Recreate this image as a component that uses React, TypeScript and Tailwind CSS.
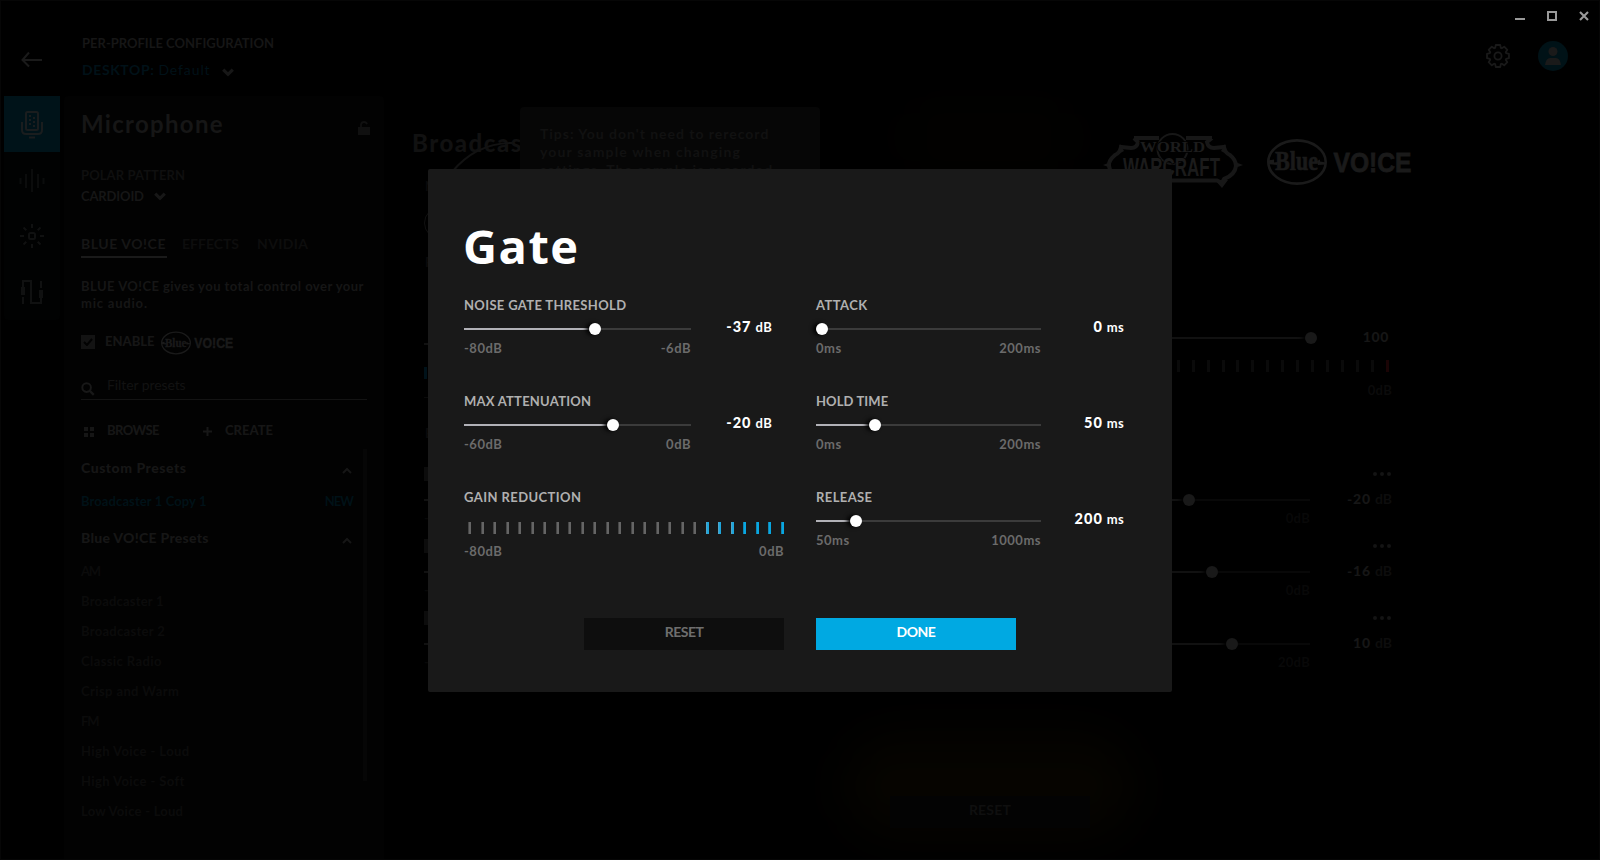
import type { ReactNode } from "react";

const presets: [string, string][] = [
  ["AM", "tracking-[-1.2px]"],
  ["Broadcaster 1", "tracking-[0.2px]"],
  ["Broadcaster 2", "tracking-[0.3px]"],
  ["Classic Radio", "tracking-[0.4px]"],
  ["Crisp and Warm", "tracking-[0.4px]"],
  ["FM", "tracking-[-1.2px]"],
  ["High Voice - Loud", "tracking-[0.4px]"],
  ["High Voice - Soft", "tracking-[0.4px]"],
  ["Low Voice - Loud", "tracking-[0.25px]"],
];

function Slider({ fill }: { fill: number }) {
  return (
    <div className="flex h-3 w-full items-center">
      <div className="h-0.5 shrink-0 bg-[#b1b1b7]" style={{ width: fill }} />
      <div className="relative size-3 shrink-0 rounded-full bg-white shadow-[-3px_0_4px_0_#000]" />
      <div className="h-0.5 grow bg-[#3b3b3b]" />
    </div>
  );
}

function DimSlider({ fill }: { fill: number }) {
  return (
    <div className="flex h-3 w-full items-center">
      <div className="h-0.5 shrink-0 bg-[#111111]" style={{ width: fill }} />
      <div className="relative size-3 shrink-0 rounded-full bg-[#191919] shadow-[-3px_0_4px_0_#000]" />
      <div className="h-0.5 grow bg-[#080808]" />
    </div>
  );
}

type ControlProps = {
  label: ReactNode;
  fill: number;
  min: string;
  max: string;
  value: string;
  unit: string;
  wide?: boolean;
};

function Control({ label, fill, min, max, value, unit, wide }: ControlProps) {
  return (
    <div className="h-24 w-[308px]">
      {label}
      <div className="mt-[5px] flex h-[21px] items-start">
        <div className={wide ? "w-[227px] pt-[4px]" : "w-[225px] pt-[4px]"}>
          <Slider fill={fill} />
        </div>
        <div className="flex grow items-baseline justify-end text-white">
          <span className="text-[14.5px] leading-4 font-black tracking-[1px]">{value}</span>
          <span className="ml-1 text-[13px] leading-4 font-bold tracking-[0.3px]">{unit}</span>
        </div>
      </div>
      <div
        className={`flex justify-between text-[13px] leading-[17px] font-bold tracking-[0.5px] text-[#6b6b6b] ${
          wide ? "w-[227px]" : "w-[225px]"
        }`}
      >
        <span>{min}</span>
        <span>{max}</span>
      </div>
    </div>
  );
}

function Label({ children, tracking }: { children: string; tracking: string }) {
  return <div className={`text-[13px] leading-[17px] font-bold text-[#b0b0b0] ${tracking}`}>{children}</div>;
}

function GainReduction() {
  return (
    <div className="h-24 w-[320px]">
      <Label tracking="tracking-[0.42px]">GAIN REDUCTION</Label>
      <div className="mt-4 ml-1 flex w-[316px] justify-between">
        {Array.from({ length: 26 }, (_, i) => (
          <span
            key={i}
            className={`h-3 w-[3px] ${
              i < 19
                ? "border-l border-[#464646] bg-[#656565]"
                : i < 22
                  ? "border-l border-[#4fa6c9] bg-[#1fa6dc]"
                  : "border-l border-[#1287b2] bg-[#08a7e2]"
            }`}
          />
        ))}
      </div>
      <div className="mt-[9px] flex justify-between text-[13px] leading-[17px] font-bold tracking-[0.5px] text-[#6b6b6b]">
        <span>-80dB</span>
        <span>0dB</span>
      </div>
    </div>
  );
}

function GateDialog() {
  return (
    <div className="absolute top-[169px] left-[428px] h-[523px] w-[744px] rounded-[2px] bg-[#191919] px-9 pt-[49px]">
      <h2 className="-ml-px font-['Open_Sans',sans-serif] text-[47px] leading-[56px] font-bold tracking-[1.5px] text-white">
        Gate
      </h2>
      <div className="mt-[23px] flex">
        <div className="w-[352px]">
          <Control
            wide
            label={<Label tracking="tracking-[0.34px]">NOISE GATE THRESHOLD</Label>}
            fill={125}
            min="-80dB"
            max="-6dB"
            value="-37"
            unit="dB"
          />
          <Control
            wide
            label={<Label tracking="tracking-[0.24px]">MAX ATTENUATION</Label>}
            fill={143}
            min="-60dB"
            max="0dB"
            value="-20"
            unit="dB"
          />
          <GainReduction />
        </div>
        <div>
          <Control
            label={<Label tracking="tracking-[0.4px]">ATTACK</Label>}
            fill={0}
            min="0ms"
            max="200ms"
            value="0"
            unit="ms"
          />
          <Control
            label={<Label tracking="tracking-[0.1px]">HOLD TIME</Label>}
            fill={53}
            min="0ms"
            max="200ms"
            value="50"
            unit="ms"
          />
          <Control
            label={<Label tracking="tracking-[0.4px]">RELEASE</Label>}
            fill={34}
            min="50ms"
            max="1000ms"
            value="200"
            unit="ms"
          />
        </div>
      </div>
      <div className="mt-[33px] flex justify-center gap-8 text-[14px] font-bold tracking-[-0.5px]">
        <button className="h-8 w-[200px] bg-[#0e0e0e] pb-[6px] text-[#6e6e6e]">RESET</button>
        <button className="h-8 w-[200px] bg-[#00a9e2] pb-[6px] text-white">DONE</button>
      </div>
    </div>
  );
}

function Chevron({ up = false }: { up?: boolean }) {
  return up ? (
    <svg width="10" height="7" viewBox="0 0 10 7">
      <path d="M1 6 5 2l4 4" fill="none" stroke="#161616" strokeWidth="2" />
    </svg>
  ) : (
    <svg width="12" height="9" viewBox="0 0 12 9">
      <path d="M1.2 1.7 6 6.3l4.8-4.6" fill="none" stroke="#171717" strokeWidth="3.2" />
    </svg>
  );
}

function BlueMark({ className }: { className: string }) {
  return (
    <svg className={className} viewBox="0 0 146 48" fill="#1a1a1a">
      <ellipse cx="30" cy="24" rx="28.7" ry="21.6" fill="none" stroke="#1a1a1a" strokeWidth="2.6" />
      <path d="M1 22.500l6-1v3l4-.5-1 3-9-1zM59 24.500l-6-1v-2l-3 1.500 1 4 8-.5z" />
      <text
        x="8"
        y="32"
        fontFamily="Liberation Serif, serif"
        fontSize="27"
        fontWeight="700"
        textLength="43"
        lengthAdjust="spacingAndGlyphs"
        stroke="#1a1a1a"
        strokeWidth="0.7"
      >
        Blue
      </text>
      <text
        x="66.500"
        y="34"
        fontFamily="Liberation Sans, sans-serif"
        fontSize="27.500"
        fontWeight="700"
        textLength="78"
        lengthAdjust="spacingAndGlyphs"
        stroke="#1a1a1a"
        strokeWidth="0.8"
      >
        VO!CE
      </text>
    </svg>
  );
}

function WarcraftMark() {
  return (
    <svg className="mt-[37px] h-[56px] w-[140px] shrink-0" viewBox="0 0 140 56">
      <g fill="none" stroke="#171717">
        <circle cx="69.500" cy="16" r="15" strokeWidth="2" />
        <path
          strokeWidth="4"
          d="M31 5H56M83 5H109M31 5 35 9Q34 15 28 15L18 14Q17 20 12 22 5 28 6 33 7 42 18 46L21 49 26 47.500H114L119 50 121 46Q132 42 133 33 133 27 127 22 122 20 121 14L111 15Q105 15 104 9L109 5"
        />
      </g>
      <path fill="#171717" d="M0 32l8-3v6zM140 32l-8-3v6zM17 11l4 7-7 4zM122 11l-4 7 7 4zM119 55l-7-8h13zM20 55l-7-8h13z" />
      <text
        x="37"
        y="18.500"
        fill="#1c1c1c"
        fontFamily="Liberation Serif, serif"
        fontSize="14"
        textLength="65"
        lengthAdjust="spacingAndGlyphs"
        stroke="#000"
        strokeWidth="1.500"
        paintOrder="stroke"
      >
        WORLD
      </text>
      <text
        x="20"
        y="43"
        fill="#1b1b1b"
        fontFamily="Liberation Sans, sans-serif"
        fontSize="26"
        fontWeight="700"
        textLength="97"
        lengthAdjust="spacingAndGlyphs"
        stroke="#000"
        strokeWidth="1.500"
        paintOrder="stroke"
      >
        WARCRAFT
      </text>
    </svg>
  );
}

const gearPoints = Array.from({ length: 8 }, (_, i) =>
  [
    [-0.33, 8.6],
    [-0.2, 11.2],
    [0.2, 11.2],
    [0.33, 8.6],
  ].map(([a, r]) => {
    const t = (i * Math.PI) / 4 + a;
    return `${(12 + r * Math.sin(t)).toFixed(2)},${(12 - r * Math.cos(t)).toFixed(2)}`;
  }),
)
  .flat()
  .join(" ");

function Header() {
  return (
    <header className="flex h-24 shrink-0">
      <div className="w-[82px] pt-[51px] pl-[21px]">
        <svg width="22" height="17" viewBox="0 0 22 17">
          <path d="M8 1.500 1.500 9 8 15.500M1.500 9H21" fill="none" stroke="#1a1a1a" strokeWidth="2" />
        </svg>
      </div>
      <div className="pt-[35px] font-bold">
        <div className="text-[13px] leading-[17px] text-[#161616]">PER-PROFILE CONFIGURATION</div>
        <div className="mt-[10px] flex items-center text-[14px] leading-4 tracking-[0.6px] text-[#001118]">
          <span>
            DESKTOP: <span className="font-normal tracking-[0.9px]">Default</span>
          </span>
          <span className="mt-1 ml-[11px]">
            <Chevron />
          </span>
        </div>
      </div>
      <div className="ml-auto">
        <div className="mt-[11px] mr-[11px] flex h-[10px] justify-end gap-[22px]">
          <span className="mt-[7px] h-0.5 w-2.5 bg-[#999999]" />
          <span className="size-2.5 border-2 border-[#999999]" />
          <svg width="10" height="10" viewBox="0 0 10 10">
            <path d="M1 1l8 8M9 1 1 9" stroke="#999999" strokeWidth="2.100" />
          </svg>
        </div>
        <div className="mt-5 mr-8 flex h-[30px] items-center justify-end gap-7">
          <svg width="24" height="24" viewBox="0 0 24 24" fill="none" stroke="#191919" strokeWidth="1.800" strokeLinejoin="round">
            <polygon points={gearPoints} />
            <circle cx="12" cy="12" r="3.600" />
          </svg>
          <svg width="30" height="30" viewBox="0 0 30 30">
            <circle cx="15" cy="15" r="15" fill="#001217" />
            <circle cx="15" cy="10.500" r="4.500" fill="#1a1a1a" />
            <path d="M7 24q1-7 5-7h6q4 0 5 7z" fill="#1a1a1a" />
          </svg>
        </div>
      </div>
    </header>
  );
}

function NavRail() {
  return (
    <nav className="h-56 w-14 shrink-0 rounded-b bg-[#010202]">
      <div className="flex h-14 items-center justify-center bg-[#001319]">
        <svg width="24" height="30" viewBox="0 0 24 30" fill="none" stroke="#1a1d1e" strokeWidth="2">
          <rect x="6" y="3" width="12" height="18" rx="1.500" />
          <path d="M2 13v8q0 4 4 4h12q4 0 4-4v-8M9 28.500h6" />
          <path d="M9 7h2M9 11h2M9 15h2M13 9h2M13 13h2M13 17h2" />
        </svg>
      </div>
      <div className="flex h-14 items-center justify-center">
        <svg width="26" height="24" viewBox="0 0 26 24" stroke="#0b0c0c" strokeWidth="2">
          <path d="M1.500 10v6M7 6v14M13 1v23M19 6v14M24.500 10v6" />
        </svg>
      </div>
      <div className="flex h-14 items-center justify-center">
        <svg width="24" height="24" viewBox="0 0 24 24" fill="none" stroke="#101111" strokeWidth="2">
          <rect x="9" y="9" width="6" height="6" rx="1.500" />
          <path d="M12 0v4M12 20v4M0 12h4M20 12h4M3.500 3.500l2.800 2.800M17.700 17.700l2.800 2.800M3.500 20.500l2.800-2.800M17.700 6.300l2.800-2.800" />
        </svg>
      </div>
      <div className="flex h-14 items-center justify-center">
        <svg width="22" height="24" viewBox="0 0 22 24" fill="none" stroke="#101111" strokeWidth="2">
          <path d="M2 17v7M2 12V1h8v22h10v-7M20 8V1" />
          <path d="M2 7v8M20 10v8" strokeWidth="4" />
        </svg>
      </div>
    </nav>
  );
}

function Sidebar() {
  return (
    <aside className="ml-1 w-80 shrink-0 rounded-t bg-[#020202] pt-3 pl-[17px] text-[13px] font-bold text-[#161616]">
      <div className="flex justify-between pr-[14px]">
        <h1 className="text-[24px] leading-[31px] tracking-[1.3px]">Microphone</h1>
        <svg className="mt-[13px]" width="12" height="14" viewBox="0 0 12 14">
          <path d="M0 6h12v8H0z" fill="#101010" />
          <path d="M3 6V3.500Q3.500 1 6 1t3 2.200" fill="none" stroke="#101010" strokeWidth="1.800" />
        </svg>
      </div>
      <div className="mt-7 leading-4 tracking-[0.1px] text-[#0f0f0f]">POLAR PATTERN</div>
      <div className="mt-[5px] flex items-center gap-[10px] leading-4">
        <span className="tracking-[-0.14px]">CARDIOID</span>
        <Chevron />
      </div>
      <div className="mt-8 flex text-[14px] leading-4">
        <span className="w-[86px] border-b-2 border-[#1a1a1a] pb-1 tracking-[0.55px]">BLUE VO!CE</span>
        <span className="ml-[15px] w-[59px] text-[#0d0d0d]">EFFECTS</span>
        <span className="ml-4 tracking-[0.36px] text-[#0d0d0d]">NVIDIA</span>
      </div>
      <p className="mt-5 leading-[17px] tracking-[0.46px]">
        BLUE VO!CE gives you total control over your
        <br />
        <span className="tracking-[0.8px]">mic audio.</span>
      </p>
      <div className="mt-[18px] flex h-6 items-center">
        <span className="flex size-3.5 items-center justify-center bg-[#131313]">
          <svg width="10" height="8" viewBox="0 0 10 8">
            <path d="M1 4l3 3 5-6" fill="none" stroke="#020202" strokeWidth="2" />
          </svg>
        </span>
        <span className="ml-[10px] w-14 font-black">ENABLE</span>
        <BlueMark className="mt-0.5 h-6 w-[73px]" />
      </div>
      <div className="mt-[21px] flex h-[25px] w-[286px] items-center border-b border-[#131313]">
        <svg className="mt-1" width="14" height="14" viewBox="0 0 14 14">
          <circle cx="5.600" cy="5.600" r="4.300" fill="none" stroke="#181818" strokeWidth="2" />
          <path d="M8.800 8.800l4 4" stroke="#181818" strokeWidth="2.400" />
        </svg>
        <span className="mb-1 ml-3 text-[14px] leading-4 font-normal tracking-[-0.09px] text-[#121212]">Filter presets</span>
      </div>
      <div className="mt-[22px] flex leading-4 font-black">
        <svg className="mt-[5px] ml-[3px]" width="10" height="10" viewBox="0 0 10 10" fill="#161616">
          <path d="M0 0h4v4H0zM6 0h4v4H6zM0 6h4v4H0zM6 6h4v4H6z" />
        </svg>
        <span className="ml-[13px] w-24 tracking-[-0.6px]">BROWSE</span>
        <svg className="mt-[5px]" width="9" height="9" viewBox="0 0 9 9">
          <path d="M0 4.500h9M4.500 0v9" stroke="#171717" strokeWidth="2" />
        </svg>
        <span className="ml-[13px]">CREATE</span>
      </div>
      <div className="mt-[11px] flex">
        <div className="w-[271px] pt-[11px]">
          <div className="flex items-center justify-between text-[14px] leading-4 font-black">
            <span className="tracking-[0.53px]">Custom Presets</span>
            <span className="mt-1">
              <Chevron up />
            </span>
          </div>
          <div className="mt-[17px] flex justify-between leading-4 text-[#001117]">
            <span className="tracking-[0.1px]">Broadcaster 1 Copy 1</span>
            <span className="mr-[-1px] tracking-[-1px]">NEW</span>
          </div>
          <div className="mt-[21px] flex items-center justify-between text-[14px] leading-4 font-black">
            <span className="tracking-[0.28px]">Blue VO!CE Presets</span>
            <span className="mt-1">
              <Chevron up />
            </span>
          </div>
          <ul className="mt-[10px] leading-[30px] text-[#0b0b0b]">
            {presets.map(([name, tracking]) => (
              <li key={name} className={tracking}>
                {name}
              </li>
            ))}
          </ul>
        </div>
        <div className="ml-[11px] h-[332px] w-1 bg-[#060606]" />
      </div>
    </aside>
  );
}

const bands = [
  { fill: 759, value: "-20", max: "0dB" },
  { fill: 782, value: "-16", max: "0dB" },
  { fill: 802, value: "10", max: "20dB" },
];

function Main() {
  return (
    <main className="relative flex w-[1212px] flex-col text-[13px] font-bold text-[#0b0b0b]">
      <div className="pointer-events-none absolute top-[640px] left-[460px] h-[100px] w-[290px] rounded-full bg-[#060400] blur-xl" />
      <div className="pointer-events-none absolute top-4 left-[520px] h-[50px] w-[170px] rounded-full bg-[#030200] blur-xl" />
      <div className="relative flex h-[82px] pl-[28px]">
        <h2 className="mt-[32px] w-[691px] text-[24px] leading-[30px] font-black tracking-[1.5px] text-[#111111]">Broadcas</h2>
        <WarcraftMark />
        <BlueMark className="mt-[42px] ml-[23px] h-12 w-[148px] shrink-0" />
        <svg className="absolute top-[42px] left-[60px]" width="72" height="40" viewBox="0 0 72 40">
          <path d="M8 34Q32 5 68 5" fill="none" stroke="#121212" strokeWidth="2" />
        </svg>
        <div className="absolute top-[11px] left-[136px] h-[100px] w-[300px] rounded bg-[#060606] px-5 pt-[18px] text-[14px] leading-[18px] whitespace-nowrap text-[#111111]">
          <div className="tracking-[0.98px]">Tips: You don't need to rerecord</div>
          <div className="tracking-[1.15px]">your sample when changing</div>
          <div className="tracking-[1.09px]">settings. The sample is recorded</div>
        </div>
      </div>
      <div className="relative pl-10">
        <div className="pl-[1px] leading-4">N</div>
        <div className="mt-[13px] size-8 rounded-full border border-[#111111]" />
        <div className="mt-[15px] pl-[1px] leading-4">P</div>
        <div className="mt-[61px] flex h-[94px] w-[968px] justify-between">
          <div className="w-[400px] pt-[12px]">
            <div className="h-0.5 bg-[#111111]" />
            <div className="mt-[22px] h-3 w-[3px] bg-[#00121a]" />
            <div className="mt-[18px] h-px bg-[#0a0a0a]" />
          </div>
          <div className="w-[467px]">
            <div className="flex items-center">
              <div className="w-[392px]">
                <DimSlider fill={380} />
              </div>
              <span className="mr-[3px] mb-0.5 grow text-right text-[14px] leading-3 font-black tracking-[0.6px] text-[#161616]">100</span>
            </div>
            <div className="mt-[15px] mr-[3px] ml-auto flex w-[287px] justify-between">
              {Array.from({ length: 20 }, (_, i) => (
                <span key={i} className={`h-3 w-[3px] ${i === 19 ? "bg-[#1a0405]" : "bg-[#0a0a0a]"}`} />
              ))}
            </div>
            <div className="mt-[10px] text-right leading-[17px] tracking-[0.3px]">0dB</div>
          </div>
        </div>
        <div className="h-[41px] pl-[1px] leading-4">E</div>
        {bands.map((band) => (
          <div key={band.value} className="h-[72px] w-[968px]">
            <div className="flex h-[16px] items-center justify-between">
              <span className="size-3.5 bg-[#0c0c0c]" />
              <svg width="19" height="4" viewBox="0 0 19 4" fill="#141414">
                <circle cx="2" cy="2" r="2" />
                <circle cx="9" cy="2" r="2" />
                <circle cx="16" cy="2" r="2" />
              </svg>
            </div>
            <div className="mt-[12px] flex h-3 items-center">
              <div className="w-[886px]">
                <DimSlider fill={band.fill} />
              </div>
              <div className="mb-[3px] grow text-right leading-4">
                <span className="text-[14px] font-black tracking-[0.8px] text-[#161616]">{band.value}</span>
                <span className="ml-1 text-[14px] text-[#0d0d0d]">dB</span>
              </div>
            </div>
            <div className="mt-1 flex w-[886px] justify-between leading-4 tracking-[0.3px] text-[#080808]">
              <span>-</span>
              <span>{band.max}</span>
            </div>
          </div>
        ))}
      </div>
      <button className="relative mt-[114px] h-8 w-[200px] self-center bg-[#030303] pb-[6px] text-[14px] tracking-[0.2px] text-[#0f0f0f]">
        RESET
      </button>
    </main>
  );
}

export default function App() {
  return (
    <div className="relative flex h-[860px] w-[1600px] flex-col overflow-hidden bg-black font-[Lato,sans-serif]">
      <Header />
      <div className="flex grow pl-1">
        <NavRail />
        <Sidebar />
        <Main />
      </div>
      <GateDialog />
      <div className="pointer-events-none absolute inset-0 border border-[#060606]" />
    </div>
  );
}
